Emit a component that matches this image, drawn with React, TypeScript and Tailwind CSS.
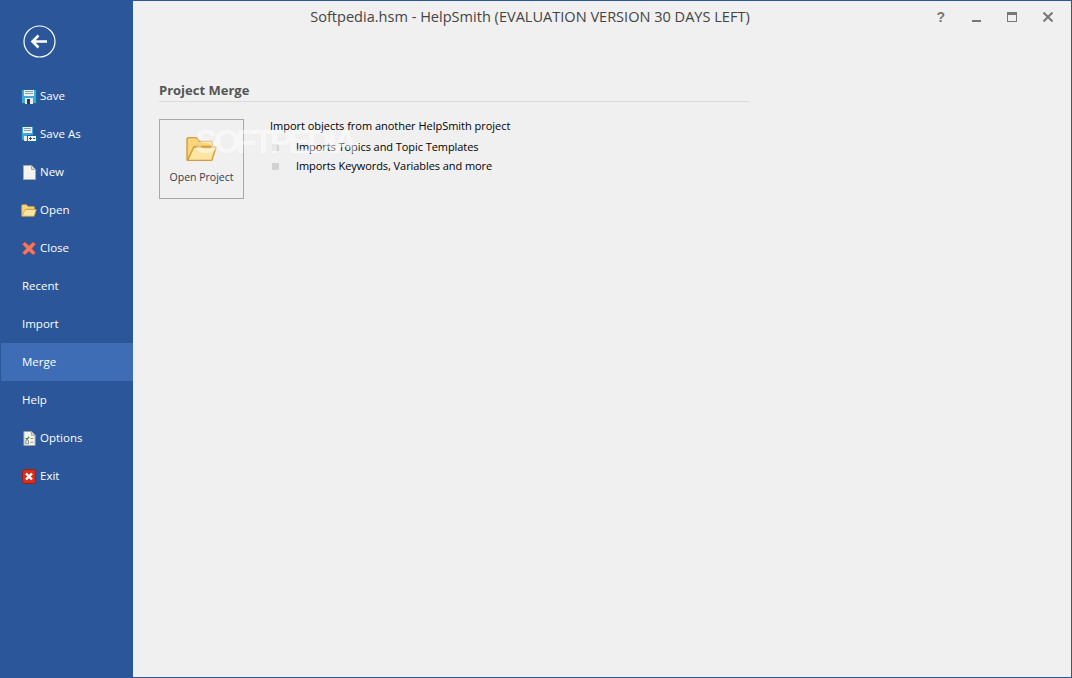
import React from 'react';

const SaveIcon = () => (
    <svg width="16" height="15" viewBox="0 0 16 15">
        <rect x="0.5" y="0.5" width="15" height="14" fill="#41a7d9" stroke="#16679c" />
        <rect x="3" y="1" width="10" height="6" fill="#eef3f7" />
        <path d="M4 2.5h8M4 4.5h8" stroke="#8b9aa8" />
        <rect x="4" y="9" width="8" height="6" fill="#e9edf0" />
        <rect x="6" y="10" width="3" height="5" fill="#2f3a46" />
    </svg>
);

const SaveAsIcon = () => (
    <svg width="16" height="16" viewBox="0 0 16 16">
        <rect x="0.5" y="0.5" width="12" height="14" fill="#41a7d9" stroke="#16679c" />
        <rect x="2" y="1" width="9" height="6" fill="#eef3f7" />
        <path d="M3 2.5h7M3 4.5h7" stroke="#8b9aa8" />
        <rect x="3" y="10" width="5" height="5" fill="#e9edf0" />
        <rect x="6.5" y="9.5" width="9" height="6" fill="#f4f7f9" stroke="#16679c" />
        <path d="M8 12.5h3M9.5 11v3M12 12.5h2" stroke="#3b4650" />
    </svg>
);

const NewIcon = () => (
    <svg width="13" height="15" viewBox="0 0 13 15">
        <path d="M0.5 0.5h8l4 4v10h-12z" fill="#f3f3f3" stroke="#a8a8a8" />
        <path d="M8.5 0.5v4h4" fill="#d8d8d8" stroke="#a8a8a8" />
    </svg>
);

const FolderIcon = ({ w, h }: { w: number; h: number }) => (
    <svg width={w} height={h} viewBox="0 0 30 25">
        <path d="M1 23V3a1.5 1.5 0 0 1 1.5-1.5h8L13 5h11a1.5 1.5 0 0 1 1.5 1.5V10H9L4 23z" fill="#f9d67c" stroke="#d49c3e" strokeWidth="1.4" />
        <path d="M1.5 23.5L7.5 10.5H29L25 23.5z" fill="#fde5a2" stroke="#d49c3e" strokeWidth="1.4" strokeLinejoin="round" />
    </svg>
);

const CloseIcon = () => (
    <svg width="14" height="15" viewBox="0 0 15 15">
        <path d="M3 0.5L7.5 4.5L12 0.5L14.5 3L10.5 7.5L14.5 12L12 14.5L7.5 10.5L3 14.5L0.5 12L4.5 7.5L0.5 3z" fill="#ee7a66" stroke="#d24a35" strokeWidth="0.8" />
    </svg>
);

const OptionsIcon = () => (
    <svg width="13" height="15" viewBox="0 0 13 16">
        <path d="M0.5 0.5h8l4 4v11h-12z" fill="#f3f4ee" stroke="#9aa09a" />
        <path d="M8.5 0.5v4h4" fill="#d8dad4" stroke="#9aa09a" />
        <path d="M2.5 7.5l1.3 1.5 2.2-2.8" fill="none" stroke="#2c7d2c" strokeWidth="1.2" />
        <path d="M7.5 8h3M7.5 12h3" stroke="#8b8f8b" />
        <rect x="2.5" y="10.5" width="3" height="3" fill="#fff" stroke="#8b8f8b" />
    </svg>
);

const ExitIcon = () => (
    <svg width="14" height="15" viewBox="0 0 14 15">
        <rect x="0.5" y="0.5" width="13" height="14" rx="2" fill="#d4301f" stroke="#9c1f14" />
        <path d="M4 4.5l6 6M10 4.5l-6 6" stroke="#fff" strokeWidth="2.4" />
    </svg>
);

const menuItems: { label: string; icon?: React.ReactNode }[] = [
    { label: 'Save', icon: <SaveIcon /> },
    { label: 'Save As', icon: <SaveAsIcon /> },
    { label: 'New', icon: <NewIcon /> },
    { label: 'Open', icon: <FolderIcon w={16} h={13} /> },
    { label: 'Close', icon: <CloseIcon /> },
    { label: 'Recent' },
    { label: 'Import' },
    { label: 'Merge' },
    { label: 'Help' },
    { label: 'Options', icon: <OptionsIcon /> },
    { label: 'Exit', icon: <ExitIcon /> },
];

const App: React.FC = () => {
    return (
        <div className="flex h-[678px] w-[1072px] overflow-hidden border-t border-r border-b border-[#2b579a] bg-[#f0f0f0] font-['Open_Sans',sans-serif]">
            {/* === Sidebar === */}
            <div className="flex w-[133px] shrink-0 flex-col bg-[#2b579a] pl-px">
                <div className="flex h-[76px] items-start pl-[22px] pt-[24px]">
                    <svg width="33" height="33" viewBox="0 0 33 33">
                        <circle cx="16.5" cy="16.5" r="15.5" fill="none" stroke="#fff" strokeWidth="1.2" />
                        <path d="M9 16.5h15M15.5 10.5l-6 6 6 6" fill="none" stroke="#fff" strokeWidth="2.6" />
                    </svg>
                </div>
                {menuItems.map((item) => (
                    <div
                        key={item.label}
                        className={`flex h-[38px] items-center text-[11.5px] text-white ${item.label === 'Merge' ? 'bg-[#3e6db5]' : ''}`}
                    >
                        {item.icon ? (
                            <>
                                <span className="ml-[20px] flex w-[16px] shrink-0 justify-center">{item.icon}</span>
                                <span className="pl-[3px]">{item.label}</span>
                            </>
                        ) : (
                            <span className="pl-[21px]">{item.label}</span>
                        )}
                    </div>
                ))}
            </div>

            {/* === Content === */}
            <div className="flex min-w-0 flex-1 flex-col">
                <div className="flex h-[32px] items-center">
                    <div className="-mt-px flex-1 pl-[4px] text-center text-[14.55px] text-[#444444]">
                        Softpedia.hsm - HelpSmith (EVALUATION VERSION 30 DAYS LEFT)
                    </div>
                    <div className="flex w-[148px] shrink-0 items-center pr-[5px] text-[#777777]">
                        <span className="flex w-[36px] justify-center text-[14px] font-bold font-['Liberation_Sans',sans-serif]">?</span>
                        <span className="flex w-[36px] justify-center pt-[7px]">
                            <span className="h-[2px] w-[9px] bg-[#777777]" />
                        </span>
                        <span className="flex w-[36px] justify-center">
                            <span className="h-[10px] w-[10px] border border-t-[3px] border-[#777777]" />
                        </span>
                        <span className="flex w-[36px] justify-center">
                            <svg width="10" height="10" viewBox="0 0 10 10">
                                <path d="M0.5 0.5l9 9M9.5 0.5l-9 9" stroke="#777777" strokeWidth="2" />
                            </svg>
                        </span>
                    </div>
                </div>

                <div className="relative pl-[26px] pt-[48px]">
                    <div className="w-[590px] border-b border-[#dcdcdc] pb-[2px] text-[13px] leading-[18px] font-bold text-[#555555]">
                        Project Merge
                    </div>
                    <div className="mt-[17px] flex items-start">
                        <div className="flex h-[80px] w-[85px] shrink-0 flex-col items-center border border-[#a8a8a8] pt-[16px]">
                            <FolderIcon w={31} h={26} />
                            <span className="mt-[8px] text-[10.5px] text-[#333b4d]">Open Project</span>
                        </div>
                        <div className="pl-[26px] text-[11px] text-black">
                            <div className="-mt-px leading-[15px] tracking-[-0.02px]">Import objects from another HelpSmith project</div>
                            <div className="mt-[7px] flex h-[15px] items-center">
                                <span className="ml-[2px] h-[7px] w-[7px] bg-[#d2d2d2]" />
                                <span className="pl-[17px] tracking-[-0.07px]">Imports Topics and Topic Templates</span>
                            </div>
                            <div className="mt-[4px] flex h-[15px] items-center">
                                <span className="ml-[2px] h-[7px] w-[7px] bg-[#d2d2d2]" />
                                <span className="pl-[17px] tracking-[-0.07px]">Imports Keywords, Variables and more</span>
                            </div>
                        </div>
                    </div>
                    {/* watermark */}
                    <div className="absolute left-[62px] top-[88px] font-['Liberation_Sans',sans-serif] text-[34px] leading-[40px] font-bold tracking-[-4px] text-white/50">
                        SOFTPEDIA<sup className="text-[8px] tracking-normal">®</sup>
                    </div>
                </div>
            </div>
        </div>
    );
};

export default App;
